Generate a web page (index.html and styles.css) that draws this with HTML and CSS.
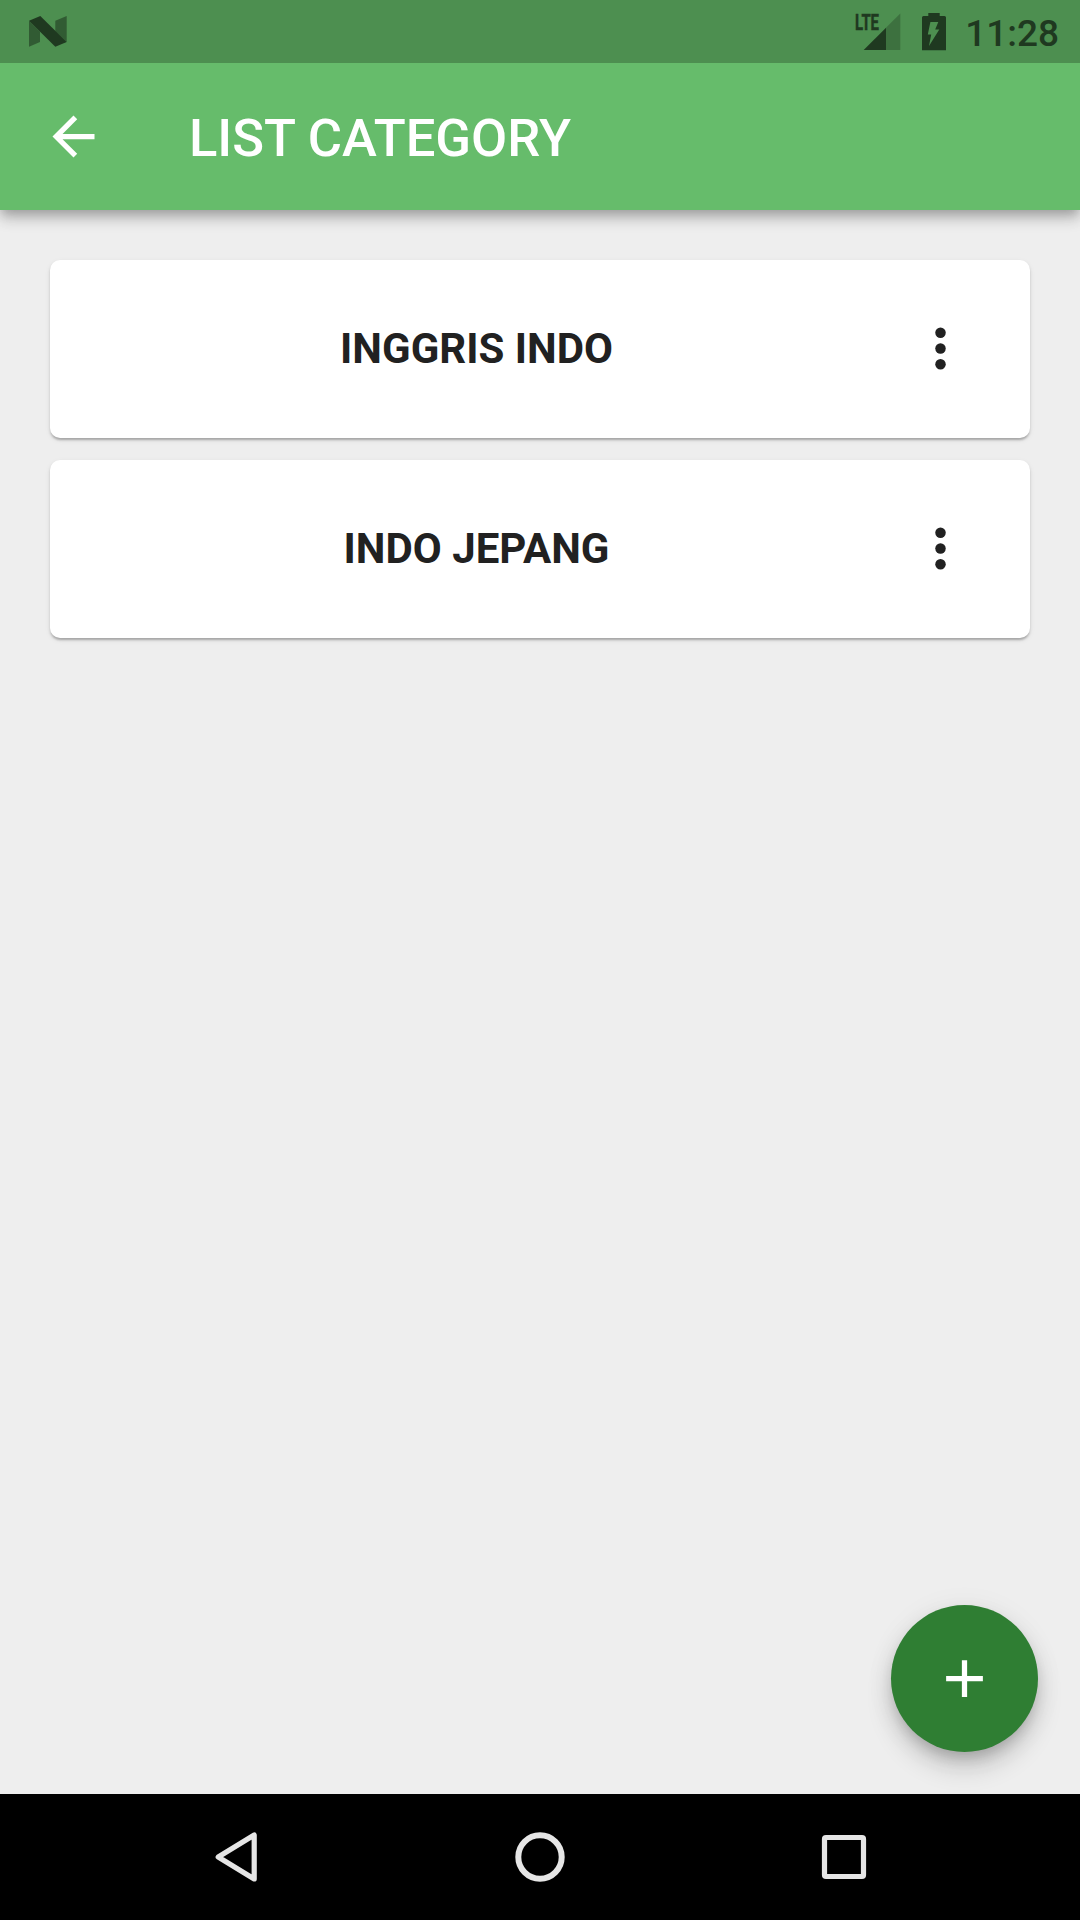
FILE: index.html
```html
<!DOCTYPE html>
<html lang="id">
<head>
<meta charset="utf-8">
<title>List Category</title>
<link rel="stylesheet" href="styles.css">
</head>
<body>
<div class="screen">
  <div class="status-bar">
    <svg class="n-logo" viewBox="0 0 38 32" aria-hidden="true">
      <path opacity=".6" d="M0 4.7 11 15.7V26L0 30.7zM26.3 4.7 37.7 0V26L26.3 15z"/>
      <path d="M0 4.7 11.3 0 37.7 26 26.3 30.7z"/>
    </svg>
    <div class="status-icons">
      <svg class="signal" viewBox="0 0 46 38" aria-hidden="true">
        <path opacity=".35" d="M31 14.7 45.3 .4V37H31z"/>
        <path d="M31 14.7V37H8.7z"/>
        <text class="lte" x="0" y="16.5" textLength="24" lengthAdjust="spacingAndGlyphs">LTE</text>
      </svg>
      <svg class="battery" viewBox="0 0 24 38" aria-hidden="true">
        <path d="M6.3 0H17.7V3H22.5Q24 3 24 4.5V37.3H0V4.5Q0 3 1.5 3H6.3z"/>
        <path class="bolt" d="M8.4 9H16.3L13.2 16.6H17.3L7 33 9.2 21.5H5.8z"/>
      </svg>
      <span class="clock">11:28</span>
    </div>
  </div>
  <header class="app-bar">
    <svg class="icon" viewBox="0 0 24 24" aria-label="Back"><path d="M20 11H7.83l5.59-5.59L12 4l-8 8 8 8 1.41-1.41L7.83 13H20v-2z"/></svg>
    <h1 class="title">LIST CATEGORY</h1>
  </header>
  <main class="list">
    <div class="card">
      <span class="card-name">INGGRIS INDO</span>
      <svg class="icon" viewBox="0 0 24 24" aria-label="More"><circle cx="12" cy="6" r="2"/><circle cx="12" cy="12" r="2"/><circle cx="12" cy="18" r="2"/></svg>
    </div>
    <div class="card">
      <span class="card-name">INDO JEPANG</span>
      <svg class="icon" viewBox="0 0 24 24" aria-label="More"><circle cx="12" cy="6" r="2"/><circle cx="12" cy="12" r="2"/><circle cx="12" cy="18" r="2"/></svg>
    </div>
    <div class="fab"><svg class="icon" viewBox="0 0 24 24" aria-label="Add"><path d="M19 13h-6v6h-2v-6H5v-2h6V5h2v6h6v2z"/></svg></div>
  </main>
  <nav class="nav-bar">
    <svg class="nav-icon" viewBox="0 0 60 60"><path d="M48.2 8V52L12.2 30z"/></svg>
    <svg class="nav-icon home" viewBox="0 0 60 60"><circle cx="30" cy="30" r="21.7"/></svg>
    <svg class="nav-icon" viewBox="0 0 60 60"><rect x="10.5" y="10.5" width="39" height="39" rx="1.5"/></svg>
  </nav>
</div>
</body>
</html>
```
FILE: styles.css
```css
* { box-sizing: border-box; }
body { margin: 0; font-family: Roboto, sans-serif; }
svg { display: block; flex: none; }
.screen {
  width: 1080px;
  height: 1920px;
  display: flex;
  flex-direction: column;
  background: #eee;
  overflow: hidden;
}
.status-bar {
  flex: none;
  height: 63px;
  padding: 0 21px 0 28.5px;
  display: flex;
  justify-content: space-between;
  background: #4d8f50;
  color: #1f3920;
  fill: #1f3920;
  position: relative;
  z-index: 2;
}
.n-logo { width: 38px; height: 32px; margin-top: 16px; }
.status-icons { display: flex; }
.signal { width: 46px; height: 38px; margin: 12.5px 21px 0 0; overflow: visible; }
.lte { font: 700 21.5px/1 Roboto, sans-serif; stroke: #1f3920; stroke-width: .5; }
.battery { width: 24px; height: 38px; margin: 12.5px 19px 0 0; }
.bolt { fill: #4d8f50; }
.clock { font-size: 37px; font-weight: 500; line-height: 44px; margin-top: 12px; }
.app-bar {
  flex: none;
  height: 147px;
  padding-left: 42px;
  display: flex;
  align-items: center;
  gap: 84px;
  background: #66bc6b;
  color: #fff;
  fill: #fff;
  position: relative;
  z-index: 1;
  box-shadow: 0 5px 10px -2px rgba(0,0,0,.2), 0 10px 13px rgba(0,0,0,.14), 0 3px 20px rgba(0,0,0,.08);
}
.icon { width: 63px; height: 63px; }
.title { margin: 0; padding-top: 2px; font-size: 52.5px; font-weight: 500; line-height: 62px; }
.list {
  flex: 1;
  padding: 50px;
  display: flex;
  flex-direction: column;
  gap: 22px;
  position: relative;
}
.card {
  height: 178px;
  padding: 0 58px 0 0;
  display: flex;
  align-items: center;
  background: #fff;
  border-radius: 10px;
  color: #212121;
  fill: #212121;
  box-shadow: 0 3px 2px -1px rgba(0,0,0,.16), 0 2px 3px rgba(0,0,0,.14), 0 2px 6px rgba(0,0,0,.06);
}
.card .icon { margin-bottom: 1px; }
.card-name { flex: 1; padding-right: 6px; text-align: center; font-size: 42px; font-weight: 700; line-height: 50px; }
.fab {
  position: absolute;
  right: 42px;
  bottom: 42px;
  width: 147px;
  height: 147px;
  border-radius: 50%;
  display: grid;
  place-items: center;
  background: #2f7e33;
  fill: #fff;
  box-shadow: 0 8px 13px -3px rgba(0,0,0,.17), 0 16px 26px rgba(0,0,0,.16), 0 3px 30px rgba(0,0,0,.06);
}
.nav-bar {
  flex: none;
  height: 126px;
  padding: 0 206px;
  display: flex;
  align-items: center;
  justify-content: space-between;
  background: #000;
  position: relative;
  z-index: 1;
}
.nav-icon { width: 60px; height: 60px; fill: none; stroke: #e6e6e6; stroke-width: 5.2; stroke-linejoin: round; }
.home { stroke-width: 6; }
```
